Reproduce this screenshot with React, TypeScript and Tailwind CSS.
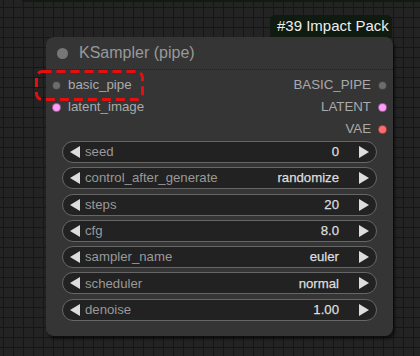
import type { ReactNode } from 'react'

type Slot = { name: string; color: string; pattern?: boolean }

const inputs: Slot[] = [
  { name: 'basic_pipe', color: '#7a7a7a', pattern: true },
  { name: 'latent_image', color: '#ff9cf9' },
]

const outputs: Slot[] = [
  { name: 'BASIC_PIPE', color: '#7a7a7a', pattern: true },
  { name: 'LATENT', color: '#ff9cf9' },
  { name: 'VAE', color: '#ff6e6e' },
]

const widgets = [
  { label: 'seed', value: '0' },
  { label: 'control_after_generate', value: 'randomize' },
  { label: 'steps', value: '20' },
  { label: 'cfg', value: '8.0' },
  { label: 'sampler_name', value: 'euler' },
  { label: 'scheduler', value: 'normal' },
  { label: 'denoise', value: '1.00' },
]

function Dot({ slot }: { slot: Slot }) {
  return (
    <span
      className="block w-[9px] h-[9px] rounded-full border border-black/40 shrink-0"
      style={{
        backgroundColor: slot.color,
        backgroundImage: slot.pattern
          ? 'radial-gradient(circle, rgba(0,0,0,0.25) 0.6px, transparent 0.8px)'
          : undefined,
        backgroundSize: slot.pattern ? '2px 2px' : undefined,
      }}
    />
  )
}

function Arrow({ dir }: { dir: 'left' | 'right' }) {
  return (
    <svg width="11" height="12" viewBox="0 0 11 12" className="shrink-0">
      {dir === 'left' ? (
        <polygon points="10,0 10,12 0,6" fill="#dddddd" />
      ) : (
        <polygon points="1,0 1,12 11,6" fill="#dddddd" />
      )}
    </svg>
  )
}

function Row({ children }: { children: ReactNode }) {
  return <div className="h-[22px] flex items-center">{children}</div>
}

export default function App() {
  return (
    <div
      className="relative w-[420px] h-[356px] overflow-hidden bg-[#232323] font-['Liberation_Sans',Arial,sans-serif]
                 bg-[linear-gradient(#161616_1px,transparent_1px),linear-gradient(90deg,#161616_1px,transparent_1px)]
                 bg-[length:10px_10px] bg-[position:3px_7px]"
    >
      {/* stray edge of a node above the viewport */}
      <div className="absolute top-0 left-[22px] right-0 h-[2px] bg-[#121a12]" />

      {/* group badge */}
      <div className="absolute left-[270px] top-[15px] w-[122px] h-[22px] rounded-t-[5px] bg-[#0f1a10] text-[#eeeeee] text-[15px] leading-[22px] pl-[7px]">
        #39 Impact Pack
      </div>

      {/* node */}
      <div className="absolute left-[46px] top-[37px] w-[347px] h-[299px] rounded-[8px] bg-[#353535] shadow-[2px_3px_3px_rgba(0,0,0,0.55)]">
        <div className="h-[33px] flex items-center border-b border-dotted border-[#222] rounded-t-[8px]">
          <span className="ml-[11px] w-[11px] h-[11px] rounded-full bg-[#777]" />
          <span className="ml-[11px] text-[16px] text-[#999]">KSampler (pipe)</span>
        </div>

        <div className="flex justify-between pt-[4px]">
          <div className="flex flex-col">
            {inputs.map((s) => (
              <Row key={s.name}>
                <span className="ml-[6px]">
                  <Dot slot={s} />
                </span>
                <span className="ml-[7px] text-[13.3px] text-[#aaa]">{s.name}</span>
              </Row>
            ))}
          </div>
          <div className="flex flex-col items-end">
            {outputs.map((s) => (
              <Row key={s.name}>
                <span className="mr-[7px] text-[13.3px] text-[#aaa]">{s.name}</span>
                <span className="mr-[6px]">
                  <Dot slot={s} />
                </span>
              </Row>
            ))}
          </div>
        </div>

        <div className="flex flex-col gap-[4.3px] px-[16px] pt-[1px]">
          {widgets.map((w) => (
            <div
              key={w.label}
              className="h-[22px] flex items-center rounded-full bg-[#222] border border-[#666] pl-[7px] pr-[7px] text-[13.2px]"
            >
              <Arrow dir="left" />
              <span className="ml-[4px] text-[#999] flex-1">{w.label}</span>
              <span className="text-[#ddd] mr-[19px] [-webkit-text-stroke:0.25px_#ddd]">{w.value}</span>
              <Arrow dir="right" />
            </div>
          ))}
        </div>
      </div>

      {/* highlight box */}
      <svg className="absolute left-[35px] top-[70px]" width="109" height="31" viewBox="0 0 109 31">
        <rect
          x="1.5"
          y="1.5"
          width="106"
          height="28"
          rx="6"
          fill="none"
          stroke="#e60f0f"
          strokeWidth="3"
          strokeDasharray="9 5"
        />
      </svg>
    </div>
  )
}
